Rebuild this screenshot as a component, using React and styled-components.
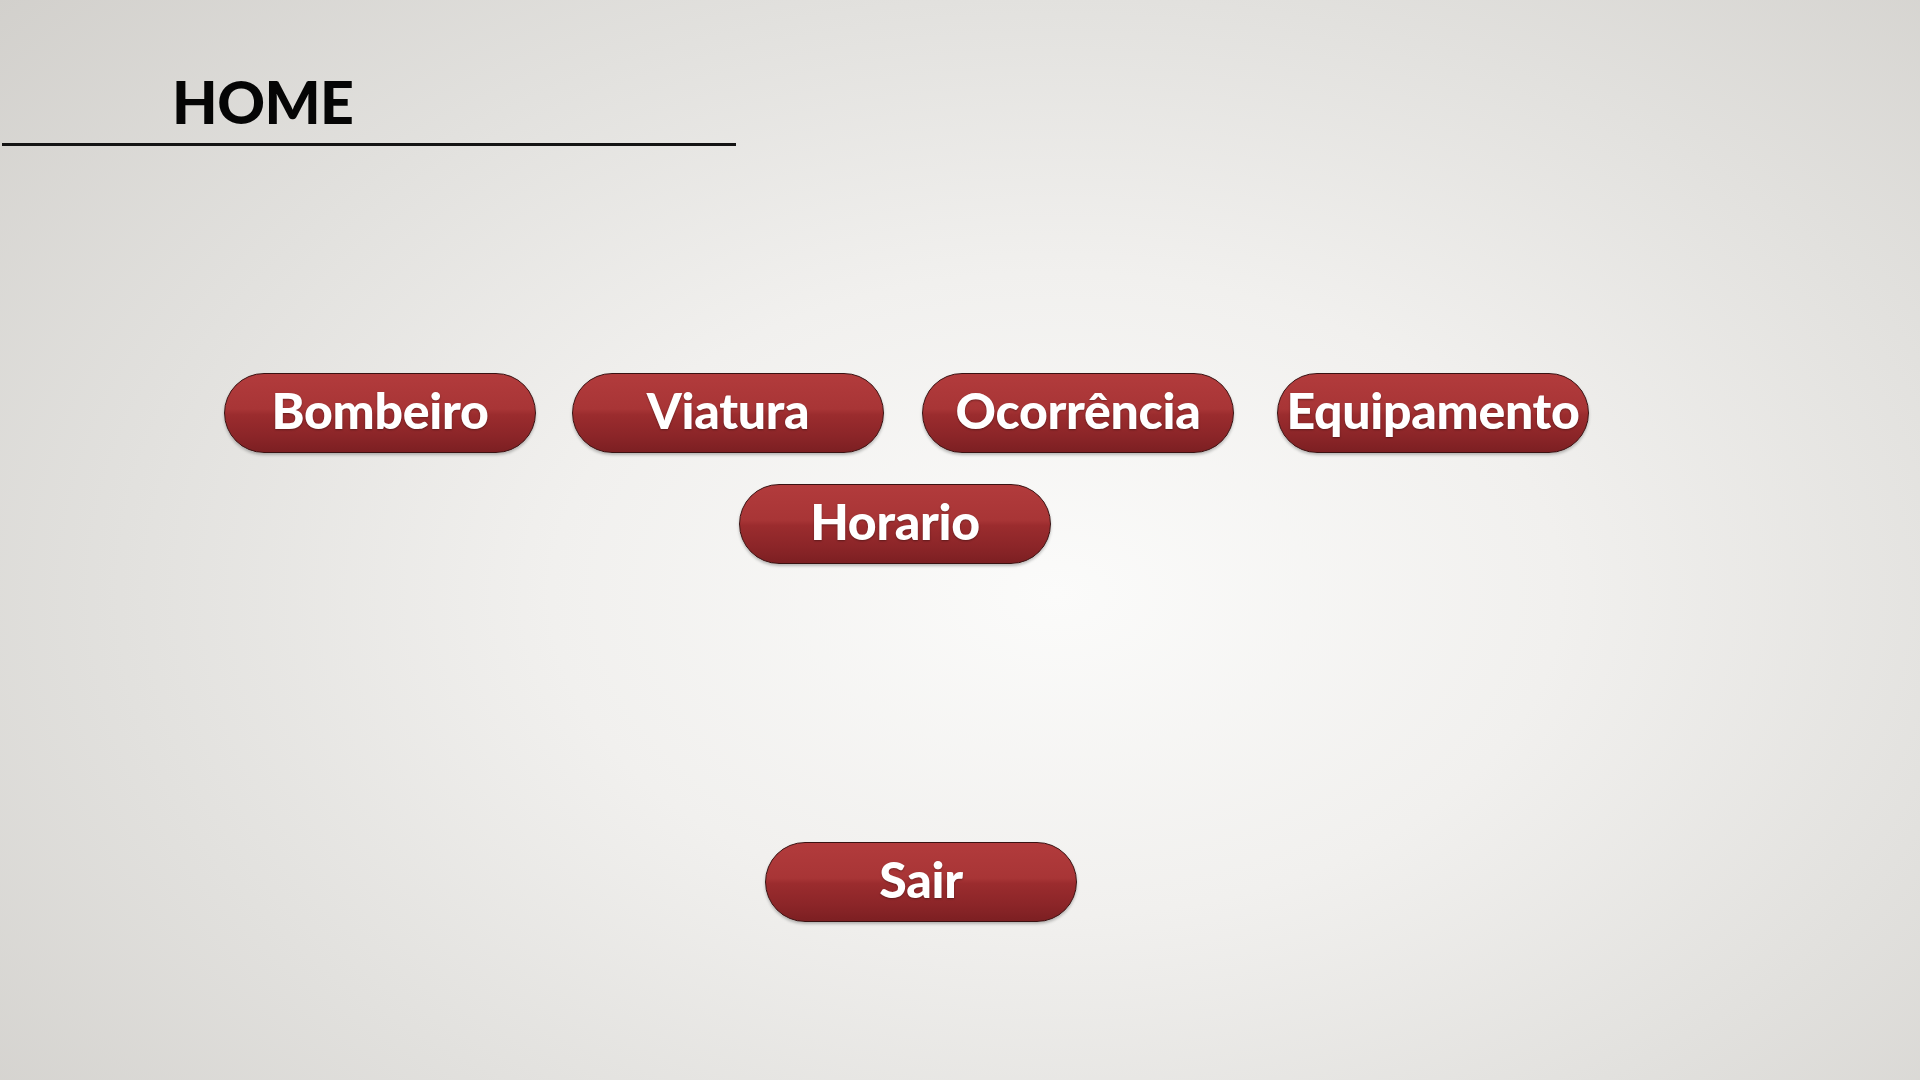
import React from "react";
import styled, { createGlobalStyle } from "styled-components";

const Global = createGlobalStyle`
  html, body { margin: 0; padding: 0; }
  body { font-family: "Lato", "Liberation Sans", sans-serif; }
`;

const Page = styled.div`
  width: 1920px;
  height: 1080px;
  overflow: hidden;
  background: radial-gradient(ellipse 75% 85% at 55% 55%, #fbfbfa 0%, #f1f0ee 35%, #e2e1de 65%, #d1cfcb 100%);
  display: flex;
  flex-direction: column;
`;

const Header = styled.header`
  display: flex;
  flex-direction: column;
  padding-top: 72px;
`;

const Title = styled.h1`
  margin: 0 0 0 172px;
  font-family: "Lato", sans-serif;
  font-weight: 900;
  font-size: 59px;
  line-height: 59px;
  letter-spacing: -0.5px;
  color: #050505;
`;

const Rule = styled.div`
  width: 734px;
  height: 3px;
  margin-left: 2px;
  margin-top: 12px;
  background: #141414;
`;

const Menu = styled.nav`
  display: flex;
  flex-direction: column;
  margin-top: 227px;
`;

const Row = styled.div`
  display: flex;
  padding-left: ${(p) => p.$left}px;
  margin-top: ${(p) => p.$top || 0}px;
`;

const Pill = styled.button`
  box-sizing: border-box;
  width: 312px;
  height: 80px;
  margin-left: ${(p) => p.$shift || 0}px;
  padding: 0 0 7px 0;
  border: 1.5px solid #3a1212;
  border-radius: 40px;
  background: linear-gradient(
    to bottom,
    #b23b3c 0%,
    #a83536 45%,
    #9b2c2e 52%,
    #8b2528 80%,
    #7c1f22 100%
  );
  box-shadow: 0 2px 3px rgba(0, 0, 0, 0.25);
  color: #ffffff;
  font-family: "Lato", sans-serif;
  font-weight: 900;
  font-size: 50px;
  line-height: 1;
  letter-spacing: -0.3px;
  text-shadow: 0 1px 2px rgba(0, 0, 0, 0.35);
  display: flex;
  align-items: center;
  justify-content: center;
  white-space: nowrap;
  cursor: pointer;
`;

export default function App() {
  return (
    <Page>
      <Global />
      <Header>
        <Title>HOME</Title>
        <Rule />
      </Header>
      <Menu>
        <Row $left={224}>
          <Pill>Bombeiro</Pill>
          <Pill $shift={36}>Viatura</Pill>
          <Pill $shift={38}>Ocorrência</Pill>
          <Pill $shift={43}>Equipamento</Pill>
        </Row>
        <Row $left={739} $top={31}>
          <Pill>Horario</Pill>
        </Row>
        <Row $left={765} $top={278}>
          <Pill>Sair</Pill>
        </Row>
      </Menu>
    </Page>
  );
}
